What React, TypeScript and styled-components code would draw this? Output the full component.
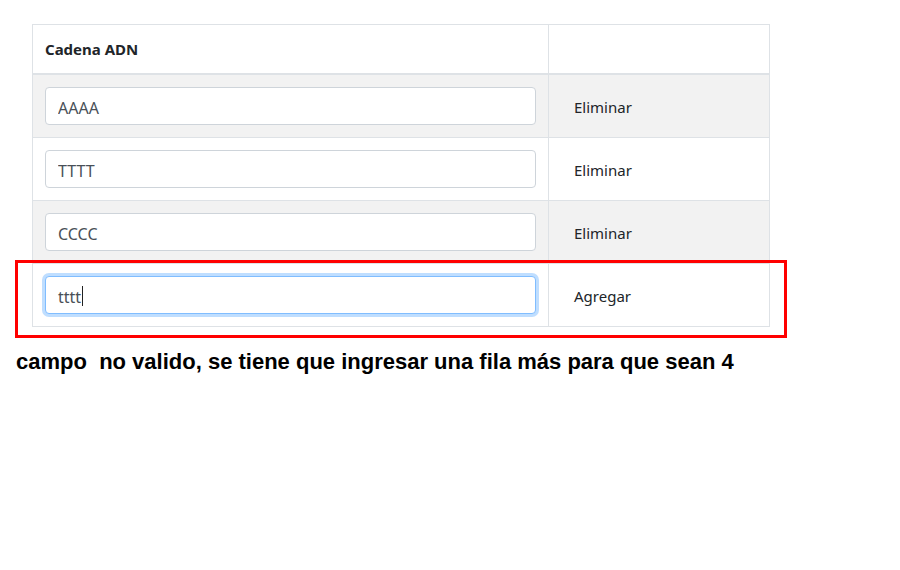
import React from "react";
import styled, { createGlobalStyle } from "styled-components";

const Global = createGlobalStyle`
  html, body { margin: 0; padding: 0; background: #fff; }
  body { font-family: "Noto Sans", "Open Sans", sans-serif; color: #212529; }
`;

const Page = styled.div`
  position: relative;
  padding: 24px 0 0 32px;
`;

const Table = styled.table`
  width: 737px;
  table-layout: fixed;
  border-collapse: collapse;
  font-size: 15px;
`;

const HeadCell = styled.th<{ $w: number }>`
  width: ${(p) => p.$w}px;
  text-align: left;
  font-weight: 700;
  font-size: 15px;
  padding: 12px;
  height: 24px;
  border: 1px solid #dee2e6;
  border-bottom: 2px solid #dee2e6;
  line-height: 24px;
`;

const Row = styled.tr<{ $striped: boolean }>`
  background: ${(p) => (p.$striped ? "#f2f2f2" : "#fff")};
`;

const Cell = styled.td`
  padding: 12px;
  border: 1px solid #dee2e6;
  vertical-align: middle;
`;

const Input = styled.input`
  box-sizing: border-box;
  display: block;
  width: 100%;
  height: 38px;
  padding: 8px 12px 4px;
  font: inherit;
  font-size: 16px;
  color: #495057;
  background: #fff;
  border: 1px solid #ced4da;
  border-radius: 4px;
  outline: none;
`;

const FocusedInput = styled.div`
  box-sizing: border-box;
  display: flex;
  align-items: center;
  width: 100%;
  height: 38px;
  padding: 8px 12px 4px;
  font-size: 16px;
  color: #495057;
  background: #fff;
  border: 1px solid #80bdff;
  border-radius: 4px;
  box-shadow: 0 0 0 3px rgba(0, 123, 255, 0.25);
`;

const Caret = styled.span`
  display: inline-block;
  width: 1px;
  height: 20px;
  margin: -2px 0 0 1px;
  background: #222;
`;

const ActionButton = styled.button`
  background: transparent;
  border: 1px solid transparent;
  padding: 7px 12px 5px;
  font: inherit;
  font-size: 15px;
  line-height: 24px;
  color: #212529;
  cursor: pointer;
`;

const Highlight = styled.div`
  position: absolute;
  left: 15px;
  top: 260px;
  width: 766px;
  height: 72px;
  border: 3px solid #ff0000;
  pointer-events: none;
`;

const Note = styled.p`
  margin: 22px 0 0 16px;
  font-family: "Liberation Sans", Arial, sans-serif;
  font-weight: 700;
  font-size: 22px;
  line-height: 25px;
  color: #000;
  white-space: pre;
`;

const rows = ["AAAA", "TTTT", "CCCC"];

export default function App() {
  return (
    <>
      <Global />
      <Page>
        <Table>
          <thead>
            <tr>
              <HeadCell $w={491}>Cadena ADN</HeadCell>
              <HeadCell $w={196}></HeadCell>
            </tr>
          </thead>
          <tbody>
            {rows.map((r, i) => (
              <Row key={r} $striped={i % 2 === 0}>
                <Cell>
                  <Input readOnly value={r} />
                </Cell>
                <Cell>
                  <ActionButton>Eliminar</ActionButton>
                </Cell>
              </Row>
            ))}
            <Row $striped={false}>
              <Cell>
                <FocusedInput>
                  tttt
                  <Caret />
                </FocusedInput>
              </Cell>
              <Cell>
                <ActionButton>Agregar</ActionButton>
              </Cell>
            </Row>
          </tbody>
        </Table>
        <Highlight />
      </Page>
      <Note>{"campo  no valido, se tiene que ingresar una fila más para que sean 4"}</Note>
    </>
  );
}
